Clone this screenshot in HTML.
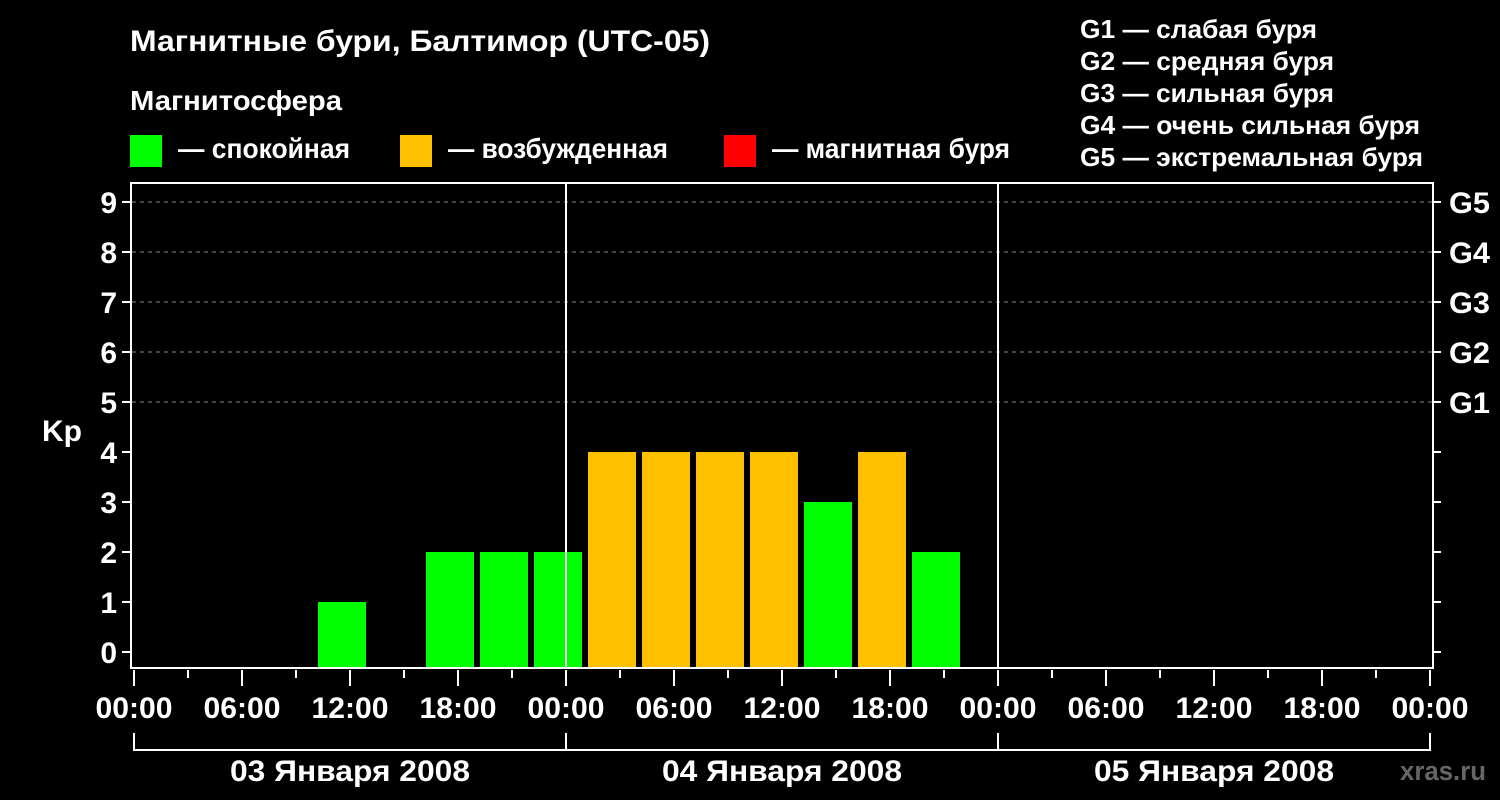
<!DOCTYPE html>
<html><head><meta charset="utf-8"><style>
html,body{margin:0;padding:0;background:#000;}
svg{display:block;font-family:"Liberation Sans",Arial,sans-serif;font-weight:bold;}
</style></head><body>
<svg width="1500" height="800" viewBox="0 0 1500 800" xmlns="http://www.w3.org/2000/svg">
<rect width="1500" height="800" fill="#000"/>
<g fill="#fff">
<text x="130" y="51" font-size="30" textLength="580" lengthAdjust="spacingAndGlyphs">Магнитные бури, Балтимор (UTC-05)</text>
<text x="130" y="110" font-size="28" textLength="212" lengthAdjust="spacingAndGlyphs">Магнитосфера</text>
<text x="178" y="158" font-size="28" textLength="172" lengthAdjust="spacingAndGlyphs">— спокойная</text>
<text x="448" y="158" font-size="28" textLength="220" lengthAdjust="spacingAndGlyphs">— возбужденная</text>
<text x="772" y="158" font-size="28" textLength="238" lengthAdjust="spacingAndGlyphs">— магнитная буря</text>
<text x="1080" y="38" font-size="26" textLength="237" lengthAdjust="spacingAndGlyphs">G1 — слабая буря</text>
<text x="1080" y="70" font-size="26" textLength="254" lengthAdjust="spacingAndGlyphs">G2 — средняя буря</text>
<text x="1080" y="102" font-size="26" textLength="254" lengthAdjust="spacingAndGlyphs">G3 — сильная буря</text>
<text x="1080" y="134" font-size="26" textLength="340" lengthAdjust="spacingAndGlyphs">G4 — очень сильная буря</text>
<text x="1080" y="166" font-size="26" textLength="343" lengthAdjust="spacingAndGlyphs">G5 — экстремальная буря</text>
</g>
<rect x="130" y="135" width="32" height="32" fill="#00ff00"/>
<rect x="400" y="135" width="32" height="32" fill="#ffc000"/>
<rect x="724" y="135" width="32" height="32" fill="#ff0000"/>

<g stroke="#888" stroke-width="1" stroke-dasharray="4,4">
<line x1="132" y1="202" x2="1432" y2="202"/>
<line x1="132" y1="252" x2="1432" y2="252"/>
<line x1="132" y1="302" x2="1432" y2="302"/>
<line x1="132" y1="352" x2="1432" y2="352"/>
<line x1="132" y1="402" x2="1432" y2="402"/>
</g>

<g>
<rect x="318" y="602" width="48" height="66" fill="#00ff00"/>
<rect x="426" y="552" width="48" height="116" fill="#00ff00"/>
<rect x="480" y="552" width="48" height="116" fill="#00ff00"/>
<rect x="534" y="552" width="48" height="116" fill="#00ff00"/>
<rect x="588" y="452" width="48" height="216" fill="#ffc000"/>
<rect x="642" y="452" width="48" height="216" fill="#ffc000"/>
<rect x="696" y="452" width="48" height="216" fill="#ffc000"/>
<rect x="750" y="452" width="48" height="216" fill="#ffc000"/>
<rect x="804" y="502" width="48" height="166" fill="#00ff00"/>
<rect x="858" y="452" width="48" height="216" fill="#ffc000"/>
<rect x="912" y="552" width="48" height="116" fill="#00ff00"/>
</g>

<g stroke="#fff" stroke-width="2" fill="none">
<rect x="131" y="183" width="1302" height="485"/>
<line x1="566" y1="183" x2="566" y2="668"/>
<line x1="998" y1="183" x2="998" y2="668"/>
<path d="M122 652H131M122 602H131M122 552H131M122 502H131M122 452H131M122 402H131M122 352H131M122 302H131M122 252H131M122 202H131"/>
<path d="M1433 652H1441M1433 602H1441M1433 552H1441M1433 502H1441M1433 452H1441M1433 402H1441M1433 352H1441M1433 302H1441M1433 252H1441M1433 202H1441"/>
<path d="M134 670V686M242 670V686M350 670V686M458 670V686M566 670V686M674 670V686M782 670V686M890 670V686M998 670V686M1106 670V686M1214 670V686M1322 670V686M1430 670V686"/>
<path d="M188 670V678M296 670V678M404 670V678M512 670V678M620 670V678M728 670V678M836 670V678M944 670V678M1052 670V678M1160 670V678M1268 670V678M1376 670V678"/>
<path d="M134 733V750H1430V733M566 733V750M998 733V750"/>
</g>

<g fill="#fff" font-size="30" text-anchor="end">
<text x="117" y="663">0</text>
<text x="117" y="613">1</text>
<text x="117" y="563">2</text>
<text x="117" y="513">3</text>
<text x="117" y="463">4</text>
<text x="117" y="413">5</text>
<text x="117" y="363">6</text>
<text x="117" y="313">7</text>
<text x="117" y="263">8</text>
<text x="117" y="213">9</text>
</g>
<text x="42" y="441" fill="#fff" font-size="30">Kp</text>
<g fill="#fff" font-size="30">
<text x="1449" y="213" textLength="41" lengthAdjust="spacingAndGlyphs">G5</text>
<text x="1449" y="263" textLength="41" lengthAdjust="spacingAndGlyphs">G4</text>
<text x="1449" y="313" textLength="41" lengthAdjust="spacingAndGlyphs">G3</text>
<text x="1449" y="363" textLength="41" lengthAdjust="spacingAndGlyphs">G2</text>
<text x="1449" y="413" textLength="41" lengthAdjust="spacingAndGlyphs">G1</text>
</g>
<g fill="#fff" font-size="30" text-anchor="middle">
<text x="134" y="718" textLength="77" lengthAdjust="spacingAndGlyphs">00:00</text>
<text x="242" y="718" textLength="77" lengthAdjust="spacingAndGlyphs">06:00</text>
<text x="350" y="718" textLength="77" lengthAdjust="spacingAndGlyphs">12:00</text>
<text x="458" y="718" textLength="77" lengthAdjust="spacingAndGlyphs">18:00</text>
<text x="566" y="718" textLength="77" lengthAdjust="spacingAndGlyphs">00:00</text>
<text x="674" y="718" textLength="77" lengthAdjust="spacingAndGlyphs">06:00</text>
<text x="782" y="718" textLength="77" lengthAdjust="spacingAndGlyphs">12:00</text>
<text x="890" y="718" textLength="77" lengthAdjust="spacingAndGlyphs">18:00</text>
<text x="998" y="718" textLength="77" lengthAdjust="spacingAndGlyphs">00:00</text>
<text x="1106" y="718" textLength="77" lengthAdjust="spacingAndGlyphs">06:00</text>
<text x="1214" y="718" textLength="77" lengthAdjust="spacingAndGlyphs">12:00</text>
<text x="1322" y="718" textLength="77" lengthAdjust="spacingAndGlyphs">18:00</text>
<text x="1430" y="718" textLength="77" lengthAdjust="spacingAndGlyphs">00:00</text>
<text x="350" y="781" textLength="240" lengthAdjust="spacingAndGlyphs">03 Января 2008</text>
<text x="782" y="781" textLength="240" lengthAdjust="spacingAndGlyphs">04 Января 2008</text>
<text x="1214" y="781" textLength="240" lengthAdjust="spacingAndGlyphs">05 Января 2008</text>
</g>
<text x="1400" y="780" fill="#666" font-size="27" textLength="86" lengthAdjust="spacingAndGlyphs">xras.ru</text>
</svg>
</body></html>
